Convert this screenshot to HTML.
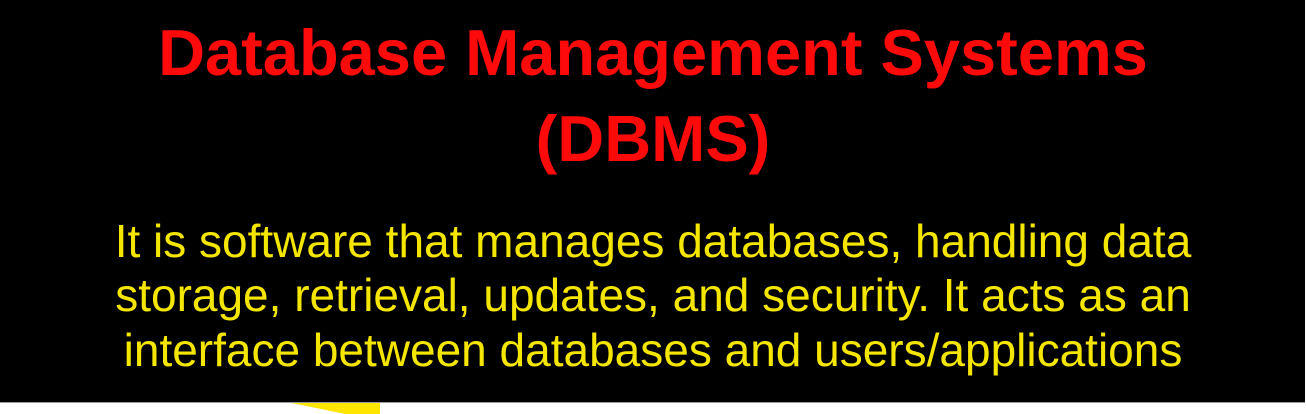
<!DOCTYPE html>
<html><head><style>
html,body{margin:0;padding:0;background:#fff;}
body{width:1306px;height:414px;position:relative;overflow:hidden;font-family:"Liberation Sans",sans-serif;}
.bg{position:absolute;left:0;top:0;width:1305px;height:402px;background:#000;border-bottom:1px solid #999;}
.t{position:absolute;left:0;width:1306px;text-align:center;color:#ff0a0a;font-weight:bold;font-size:65px;line-height:1;}
.b{position:absolute;left:0;width:1306px;text-align:center;color:#f5e600;font-size:46px;line-height:1;}
</style></head><body>
<div class="bg"></div>
<div class="t" style="top:20px;">Database Management Systems</div>
<div class="t" style="top:106px;">(DBMS)</div>
<div class="b" style="top:218px;">It is software that manages databases, handling data</div>
<div class="b" style="top:272px;">storage, retrieval, updates, and security. It acts as an</div>
<div class="b" style="top:327px;">interface between databases and users/applications</div>
<svg style="position:absolute;left:0;top:0" width="1306" height="414"><polygon points="292,403 380,403 380,414 345,414" fill="#ffe600"/></svg>
</body></html>
